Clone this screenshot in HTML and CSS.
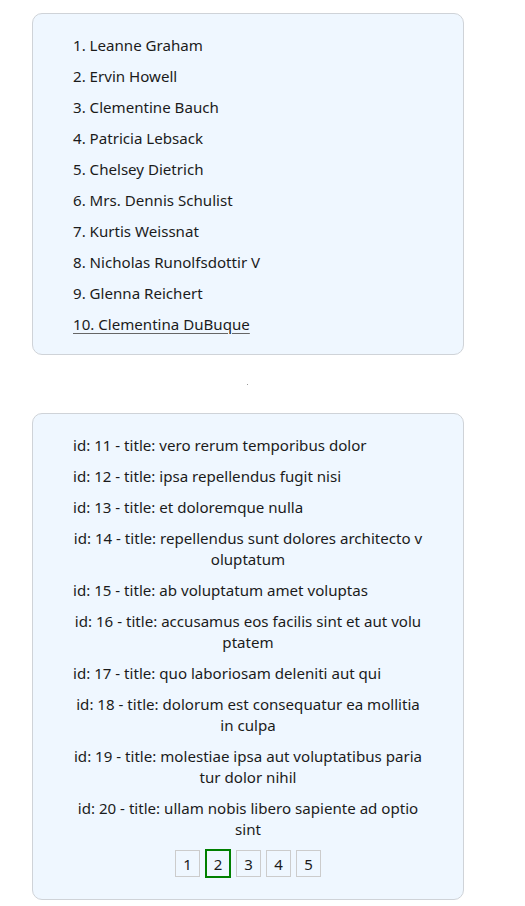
FILE: index.html
```html
<!DOCTYPE html>
<html lang="en">
<head>
<meta charset="utf-8">
<title>Users and posts</title>
<link rel="stylesheet" href="styles.css">
</head>
<body>
<div class="page">
  <section class="card users">
    <ol class="user-list">
      <li>1. Leanne Graham</li>
      <li>2. Ervin Howell</li>
      <li>3. Clementine Bauch</li>
      <li>4. Patricia Lebsack</li>
      <li>5. Chelsey Dietrich</li>
      <li>6. Mrs. Dennis Schulist</li>
      <li>7. Kurtis Weissnat</li>
      <li>8. Nicholas Runolfsdottir V</li>
      <li>9. Glenna Reichert</li>
      <li class="hovered">10. Clementina DuBuque</li>
    </ol>
  </section>
  <div class="spacer"><span class="dot"></span></div>
  <section class="card posts">
    <ul class="post-list">
      <li>id: 11 - title: vero rerum temporibus dolor</li>
      <li>id: 12 - title: ipsa repellendus fugit nisi</li>
      <li>id: 13 - title: et doloremque nulla</li>
      <li>id: 14 - title: repellendus sunt dolores architecto voluptatum</li>
      <li>id: 15 - title: ab voluptatum amet voluptas</li>
      <li>id: 16 - title: accusamus eos facilis sint et aut voluptatem</li>
      <li>id: 17 - title: quo laboriosam deleniti aut qui</li>
      <li>id: 18 - title: dolorum est consequatur ea mollitia in culpa</li>
      <li>id: 19 - title: molestiae ipsa aut voluptatibus pariatur dolor nihil</li>
      <li>id: 20 - title: ullam nobis libero sapiente ad optio sint</li>
    </ul>
    <nav class="pager">
      <button class="page-btn">1</button>
      <button class="page-btn active">2</button>
      <button class="page-btn">3</button>
      <button class="page-btn">4</button>
      <button class="page-btn">5</button>
    </nav>
  </section>
</div>
</body>
</html>
```

FILE: styles.css
```css
html, body {
  margin: 0;
  padding: 0;
  background: #ffffff;
}
body {
  font-family: "Noto Sans", "Open Sans", sans-serif;
  font-size: 15.1px;
  color: #1b1b1b;
}
.page {
  width: 432px;
  margin-left: 32px;
  padding-top: 13px;
  display: flex;
  flex-direction: column;
}
.card {
  box-sizing: border-box;
  width: 432px;
  background: #eff7ff;
  border: 1px solid #cfd3d8;
  border-radius: 10px;
}
.users {
  padding: 16px 40px 14px;
}
.user-list, .post-list {
  list-style: none;
  margin: 0;
  padding: 0;
}
.user-list li, .post-list li {
  line-height: 21px;
  padding: 5px 0;
}
.user-list li.hovered {
  text-decoration: underline;
  text-decoration-color: #666;
  text-underline-offset: 3px;
}
.spacer {
  height: 58px;
  display: flex;
  align-items: center;
  justify-content: center;
}
.dot {
  width: 1px;
  height: 1px;
  background: #9a9a9a;
  margin-left: -1px;
}
.posts {
  padding: 16px 40px 21px;
}
.post-list {
  display: flex;
  flex-direction: column;
  align-items: flex-start;
}
.post-list li {
  width: fit-content;
  max-width: 350px;
  text-align: center;
  word-break: break-all;
}
.pager {
  display: flex;
  justify-content: center;
  align-items: center;
  gap: 5px;
  margin-top: 4px;
}
.page-btn {
  box-sizing: border-box;
  width: 25px;
  height: 27px;
  padding: 0;
  border: 1px solid #cccccc;
  background: transparent;
  font-family: inherit;
  font-size: 15px;
  color: #1b1b1b;
  display: flex;
  align-items: center;
  justify-content: center;
}
.page-btn.active {
  width: 26px;
  height: 29px;
  border: 2px solid #008000;
}
```
